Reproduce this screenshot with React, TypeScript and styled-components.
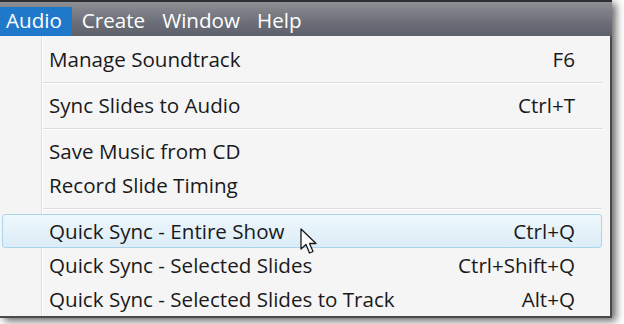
import React from "react";
import styled, { createGlobalStyle } from "styled-components";

const Global = createGlobalStyle`
  html, body { margin: 0; padding: 0; background: #ffffff; }
  body { font-family: "Open Sans", "Noto Sans", sans-serif; }
`;

const Page = styled.div`
  width: 624px;
  height: 324px;
  overflow: hidden;
  background: #ffffff;
`;

const Frame = styled.div`
  width: 612px;
  display: flex;
  flex-direction: column;
  box-shadow: 4px 3px 8px rgba(0, 0, 0, 0.6);
`;

const MenuBar = styled.div`
  height: 34px;
  border-top: 2px solid #2e2f33;
  background: linear-gradient(#8d8f94, #6c6f78 60%, #5e616b);
  display: flex;
  align-items: flex-end;
`;

const BarItem = styled.div<{ $active?: boolean }>`
  height: 29px;
  padding: 0 ${(p) => (p.$active ? "10px" : "7px")} 3px
    ${(p) => (p.$active ? "6px" : "10px")};
  display: flex;
  align-items: center;
  font-size: 20.6px;
  color: #ffffff;
  background: ${(p) => (p.$active ? "#1f78c9" : "transparent")};
  line-height: 1;
  box-sizing: border-box;
`;

const Dropdown = styled.div`
  position: relative;
  border-right: 2px solid #4a4a4a;
  border-bottom: 2px solid #4a4a4a;
  padding: 6px 8px 0 2px;
  display: flex;
  flex-direction: column;
  background-image: linear-gradient(
    to right,
    #f4f4f4 0,
    #f4f4f4 41px,
    #e0e0e0 41px,
    #e0e0e0 42px,
    #ffffff 42px,
    #ffffff 43px,
    #f5f5f5 43px
  );
`;

const Item = styled.div<{ $hover?: boolean }>`
  height: 34px;
  box-sizing: border-box;
  display: flex;
  align-items: center;
  justify-content: space-between;
  padding: 0 26px 0 46px;
  font-size: 20.6px;
  color: #1a1a1a;
  border-radius: 3px;
  border: 1px solid ${(p) => (p.$hover ? "#a9d6ea" : "transparent")};
  background: ${(p) =>
    p.$hover ? "linear-gradient(#eef7fc, #dcedf7)" : "transparent"};
  span {
    white-space: nowrap;
  }
`;

const Separator = styled.div`
  height: 12px;
  display: flex;
  align-items: center;
  padding-left: 41px;
  &::after {
    content: "";
    flex: 1;
    height: 1px;
    background: #dcdcdc;
    box-shadow: 0 1px 0 #ffffff;
  }
`;

const Cursor = styled.svg`
  position: absolute;
  left: 300px;
  top: 192px;
  width: 20px;
  height: 28px;
`;

type Entry = { label: string; key?: string; hover?: boolean } | "sep";

const entries: Entry[] = [
  { label: "Manage Soundtrack", key: "F6" },
  "sep",
  { label: "Sync Slides to Audio", key: "Ctrl+T" },
  "sep",
  { label: "Save Music from CD" },
  { label: "Record Slide Timing" },
  "sep",
  { label: "Quick Sync - Entire Show", key: "Ctrl+Q", hover: true },
  { label: "Quick Sync - Selected Slides", key: "Ctrl+Shift+Q" },
  { label: "Quick Sync - Selected Slides to Track", key: "Alt+Q" },
];

export default function App() {
  return (
    <Page>
      <Global />
      <Frame>
        <MenuBar>
          <BarItem $active>Audio</BarItem>
          <BarItem>Create</BarItem>
          <BarItem>Window</BarItem>
          <BarItem>Help</BarItem>
        </MenuBar>
        <Dropdown>
          {entries.map((e, i) =>
            e === "sep" ? (
              <Separator key={i} />
            ) : (
              <Item key={i} $hover={e.hover}>
                <span>{e.label}</span>
                <span>{e.key ?? ""}</span>
              </Item>
            )
          )}
          <Cursor viewBox="0 0 20 28">
            <path
              d="M1 1 L1 21 L6 16.5 L9.5 25 L13 23.5 L9.5 15.5 L16 15.5 Z"
              fill="#ffffff"
              stroke="#1a1a1a"
              strokeWidth="1.3"
              strokeLinejoin="round"
            />
          </Cursor>
        </Dropdown>
      </Frame>
    </Page>
  );
}
